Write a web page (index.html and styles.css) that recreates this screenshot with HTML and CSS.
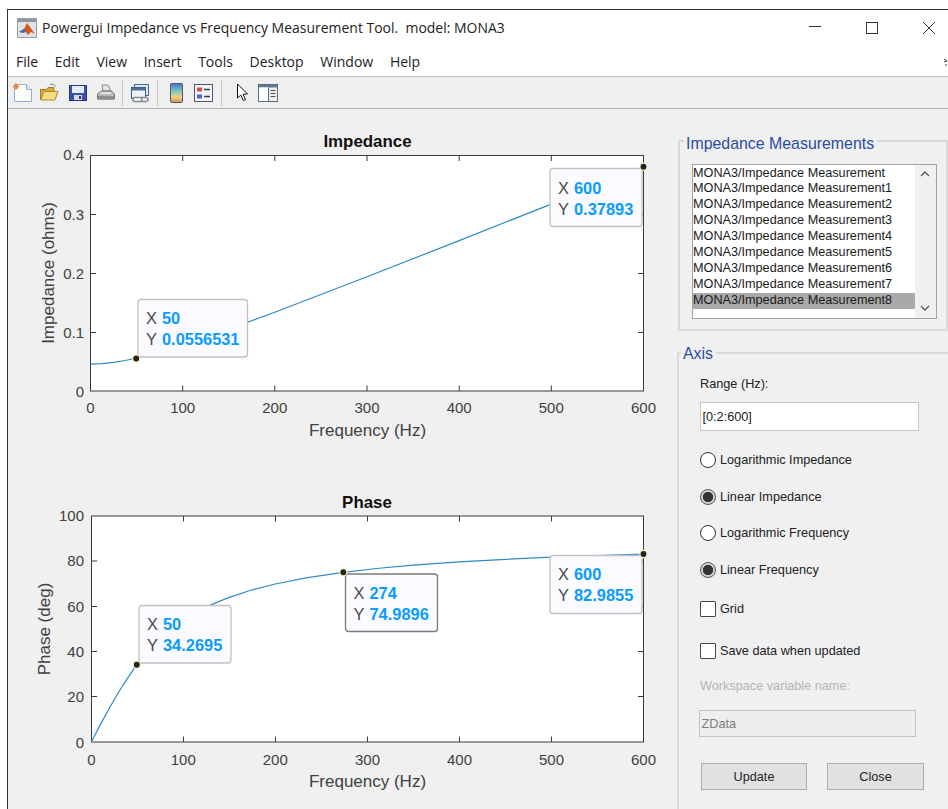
FILE: index.html
```html
<!DOCTYPE html>
<html lang="en">
<head>
<meta charset="utf-8">
<title>Powergui Impedance vs Frequency Measurement Tool</title>
<link rel="stylesheet" href="styles.css">
</head>
<body>
<div class="window">
  <header class="titlebar">
    <svg class="app-icon" width="20" height="20" viewBox="0 0 20 20">
      <rect x="0.5" y="0.5" width="19" height="19" fill="#dfe3ea" stroke="#9aa0a8"/>
      <rect x="1" y="1" width="18" height="3" fill="#8f959d"/>
      <path d="M2 14l5-3 3-6 3 4 5 7-4-2-3 3-3-4z" fill="#d9581c"/>
      <path d="M2 14l5-3 2 3-3 1z" fill="#3d6fb0"/>
    </svg>
    <span class="title-text">Powergui Impedance vs Frequency Measurement Tool.&nbsp; model: MONA3</span>
    <div class="window-controls">
      <svg width="14" height="14" viewBox="0 0 14 14"><path d="M1 5.5h12" stroke="#333" fill="none"/></svg>
      <svg width="14" height="14" viewBox="0 0 14 14"><rect x="1.5" y="1.5" width="11" height="11" stroke="#333" fill="none"/></svg>
      <svg width="14" height="14" viewBox="0 0 14 14"><path d="M1 1l12 12M13 1L1 13" stroke="#333" fill="none"/></svg>
    </div>
  </header>

  <nav class="menubar">
    <span>File</span><span>Edit</span><span>View</span><span>Insert</span><span>Tools</span><span>Desktop</span><span>Window</span><span>Help</span>
    <svg class="dock-arrow" width="4" height="8" viewBox="0 0 4 8"><path d="M0 1l3 2-3 1M1 7h2" stroke="#444" fill="none"/></svg>
  </nav>

  <div class="toolbar">
    <!-- new figure -->
    <svg class="tool" width="20" height="20" viewBox="0 0 20 20">
      <path d="M1.500 1.500h12l5 5v12h-17z" fill="#fdfdfa" stroke="#8fb0d0"/>
      <path d="M13.500 1.500v5h5" fill="#dfe9f3" stroke="#8fb0d0"/>
      <circle cx="3" cy="3.500" r="2.600" fill="#f0a050"/>
      <path d="M3 0v7M0 3.500h6" stroke="#e87040"/>
    </svg>
    <!-- open -->
    <svg class="tool g6" width="20" height="20" viewBox="0 0 20 20">
      <path d="M1.500 6.500h6l1.500-2h6v12h-13.500z" fill="#d9a93a" stroke="#a67f25"/>
      <path d="M11 1.500c2.500-.8 4.500 0 5.500 2" stroke="#5c86b0" fill="none"/>
      <path d="M2 17l2.500-8.500h14.500l-3 8.500z" fill="#f6dc80" stroke="#b08a30"/>
    </svg>
    <!-- save -->
    <svg class="tool g9" width="20" height="20" viewBox="0 0 20 20">
      <rect x="1.500" y="2.500" width="17" height="15" fill="#3b4fb0" stroke="#2a387f"/>
      <rect x="4" y="3" width="12" height="7" fill="#e8ecf8"/>
      <rect x="6" y="12" width="8" height="5" fill="#d9dce6"/>
      <rect x="11" y="13" width="2" height="3" fill="#333a60"/>
    </svg>
    <!-- print -->
    <svg class="tool g8" width="20" height="20" viewBox="0 0 20 20">
      <path d="M6 2h6l3 6H7z" fill="#e6e6e6" stroke="#8a8a8a"/>
      <path d="M1.500 11l4-3h10l3 3v5h-17z" fill="#b8b8b8" stroke="#777"/>
      <path d="M2 13h16v3.500H2z" fill="#8d8d8d"/>
      <rect x="4" y="9.500" width="11" height="1.500" fill="#ececec"/>
    </svg>
    <span class="sep g6"></span>
    <!-- link plot -->
    <svg class="tool g7" width="20" height="20" viewBox="0 0 20 20">
      <rect x="4.500" y="1.500" width="14" height="11" fill="#dfe8f1" stroke="#4a6a8c"/>
      <rect x="1.500" y="4.500" width="14" height="11" fill="#eef2f6" stroke="#3f5f82"/>
      <rect x="2" y="5" width="13" height="2.500" fill="#4a6f98"/>
      <path d="M5 14.500h5a2 2 0 0 1 0 4H5a2 2 0 0 1 0-4zM11 14.500h5a2 2 0 0 1 0 4h-5" stroke="#7d8a96" stroke-width="1.500" fill="#fff"/>
    </svg>
    <span class="sep g7"></span>
    <!-- colorbar -->
    <svg class="tool g12" width="13" height="20" viewBox="0 0 13 20">
      <defs>
        <linearGradient id="cbar" x1="0" y1="0" x2="0" y2="1">
          <stop offset="0" stop-color="#3f74c4"/>
          <stop offset="0.45" stop-color="#8ccbbc"/>
          <stop offset="0.7" stop-color="#ead57c"/>
          <stop offset="1" stop-color="#e08c50"/>
        </linearGradient>
      </defs>
      <rect x="0.500" y="0.500" width="12" height="19" rx="1" fill="url(#cbar)" stroke="#4a5a72"/>
    </svg>
    <!-- legend -->
    <svg class="tool g11" width="20" height="20" viewBox="0 0 20 20">
      <rect x="0.500" y="1.500" width="18" height="17" fill="#f4f5f8" stroke="#4a5a72"/>
      <rect x="3" y="4.500" width="5" height="4" fill="#e04848"/>
      <rect x="3" y="11.500" width="5" height="4" fill="#5060e0"/>
      <path d="M10 6.500h6M10 13.500h6" stroke="#333a55" stroke-width="1.500"/>
    </svg>
    <span class="sep g7"></span>
    <!-- pointer -->
    <svg class="tool g14" width="13" height="20" viewBox="0 0 13 20">
      <path d="M1.500 1v14l3.300-2.900 2.500 5.400 2.200-1-2.500-5.200 4.500-.3z" fill="#fff" stroke="#111"/>
    </svg>
    <!-- property panel -->
    <svg class="tool g9" width="20" height="20" viewBox="0 0 20 20">
      <rect x="0.500" y="1.500" width="19" height="17" fill="#eceef0" stroke="#5d6a78"/>
      <rect x="1" y="2" width="18" height="2.500" fill="#5f7a96"/>
      <rect x="1" y="4.500" width="9" height="13.500" fill="#fff"/>
      <path d="M10.500 4.500v13.500" stroke="#5d6a78"/>
      <path d="M12.500 7.500h5M12.500 10.500h5M12.500 13.500h5" stroke="#47525e"/>
    </svg>
  </div>

  <main class="content">
    <!-- Both axes share one drawing; the view box uses the window's own coordinates. -->
    <svg class="plots" width="669" height="700" viewBox="8 109 669 700">
      <g class="axes">
        <rect x="90.500" y="155.500" width="553" height="235.500" class="plot-area"/>
        <path class="ticks" d="M182.700 391v-5.500M274.800 391v-5.500M367 391v-5.500M459.200 391v-5.500M551.300 391v-5.500M182.700 155.500v5.500M274.800 155.500v5.500M367 155.500v5.500M459.200 155.500v5.500M551.300 155.500v5.500M90.500 332.500h5.500M90.500 273.500h5.500M90.500 214.500h5.500M643.500 332.500h-5.500M643.500 273.500h-5.500M643.500 214.500h-5.500"/>
        <polyline class="curve" points="90.500,364.200 102,363.600 113.500,362.300 125.100,360.500 136.600,358.200 159.600,352.200 182.700,345.100 205.700,337.400 228.800,329.200 274.800,312.200 367,276.800 459.200,240.600 551.300,204.100 643.500,167.400"/>
        <text class="plot-title" x="367.500" y="147">Impedance</text>
        <g class="tick-y">
          <text x="84" y="160">0.4</text><text x="84" y="219.500">0.3</text><text x="84" y="278.500">0.2</text><text x="84" y="338">0.1</text><text x="84" y="397">0</text>
        </g>
        <g class="tick-x">
          <text x="90.500" y="413">0</text><text x="182.700" y="413">100</text><text x="274.800" y="413">200</text><text x="367" y="413">300</text><text x="459.200" y="413">400</text><text x="551.300" y="413">500</text><text x="643.500" y="413">600</text>
        </g>
        <text class="axis-label" x="367.500" y="436">Frequency (Hz)</text>
        <text class="axis-label" transform="translate(54 273) rotate(-90)">Impedance (ohms)</text>

        <g class="tip">
          <rect x="138" y="299.500" width="109.500" height="57.500" rx="3"/>
          <text x="146" y="324">X <tspan class="val" x="162">50</tspan></text>
          <text x="146" y="345">Y <tspan class="val" x="162">0.0556531</tspan></text>
        </g>
        <circle class="marker" cx="136.200" cy="358.500" r="3.600"/>
        <g class="tip">
          <rect x="550" y="168.500" width="92" height="58" rx="3"/>
          <text x="558" y="194">X <tspan class="val" x="574">600</tspan></text>
          <text x="558" y="215">Y <tspan class="val" x="574">0.37893</tspan></text>
        </g>
        <circle class="marker" cx="643.500" cy="166.800" r="3.600"/>
      </g>

      <g class="axes">
        <rect x="91.500" y="516" width="552" height="226" class="plot-area"/>
        <path class="ticks" d="M183.500 742v-5.500M275.500 742v-5.500M367.500 742v-5.500M459.500 742v-5.500M551.500 742v-5.500M183.500 516v5.500M275.500 516v5.500M367.500 516v5.500M459.500 516v5.500M551.500 516v5.500M91.500 696.500h5.500M91.500 651.500h5.500M91.500 606.500h5.500M91.500 561h5.500M643.500 696.500h-5.500M643.500 651.500h-5.500M643.500 606.500h-5.500M643.500 561h-5.500"/>
        <polyline class="curve" points="91.300,742 95.900,733.200 100.500,724.400 105.100,715.900 109.700,707.500 114.300,699.500 118.900,691.700 123.500,684.300 128.100,677.300 132.700,670.700 137.300,664.400 146.500,653.200 160.300,638.800 171.800,628.900 183.300,620.500 194.800,613.200 206.300,607.100 217.800,601.900 229.300,597.400 252.300,589.800 275.300,584 307.500,577.600 343.400,572.300 376.500,568.500 413.300,565.100 459.300,561.900 505.300,559.300 551.300,557.200 643.300,554.200"/>
        <text class="plot-title" x="367" y="508">Phase</text>
        <g class="tick-y">
          <text x="84" y="521">100</text><text x="84" y="566">80</text><text x="84" y="611.500">60</text><text x="84" y="657">40</text><text x="84" y="702">20</text><text x="84" y="748">0</text>
        </g>
        <g class="tick-x">
          <text x="91.300" y="765">0</text><text x="183.300" y="765">100</text><text x="275.300" y="765">200</text><text x="367.500" y="765">300</text><text x="459.500" y="765">400</text><text x="551.500" y="765">500</text><text x="643.500" y="765">600</text>
        </g>
        <text class="axis-label" x="367.500" y="787">Frequency (Hz)</text>
        <text class="axis-label" transform="translate(50 629) rotate(-90)">Phase (deg)</text>

        <g class="tip">
          <rect x="139" y="605.500" width="92" height="57.500" rx="3"/>
          <text x="147" y="630">X <tspan class="val" x="163">50</tspan></text>
          <text x="147" y="651">Y <tspan class="val" x="163">34.2695</tspan></text>
        </g>
        <circle class="marker" cx="136.800" cy="664.700" r="3.600"/>
        <g class="tip tip-active">
          <rect x="345.500" y="574" width="92" height="57.500" rx="3"/>
          <text x="353.500" y="599">X <tspan class="val" x="369.500">274</tspan></text>
          <text x="353.500" y="620">Y <tspan class="val" x="369.500">74.9896</tspan></text>
        </g>
        <circle class="marker" cx="343.300" cy="572.300" r="3.600"/>
        <g class="tip">
          <rect x="550" y="555.500" width="92" height="58" rx="3"/>
          <text x="558" y="580">X <tspan class="val" x="574">600</tspan></text>
          <text x="558" y="601">Y <tspan class="val" x="574">82.9855</tspan></text>
        </g>
        <circle class="marker" cx="643.500" cy="554" r="3.600"/>
      </g>
    </svg>

    <aside class="side">
      <section class="group group-list">
        <h2 class="group-title">Impedance Measurements</h2>
        <div class="listbox">
          <ul class="list-items">
            <li>MONA3/Impedance Measurement</li>
            <li>MONA3/Impedance Measurement1</li>
            <li>MONA3/Impedance Measurement2</li>
            <li>MONA3/Impedance Measurement3</li>
            <li>MONA3/Impedance Measurement4</li>
            <li>MONA3/Impedance Measurement5</li>
            <li>MONA3/Impedance Measurement6</li>
            <li>MONA3/Impedance Measurement7</li>
            <li class="selected">MONA3/Impedance Measurement8</li>
          </ul>
          <div class="scrollbar">
            <svg width="10" height="6" viewBox="0 0 10 6"><path d="M1 5l4-4 4 4" stroke="#555" stroke-width="1.300" fill="none"/></svg>
            <svg width="10" height="6" viewBox="0 0 10 6"><path d="M1 1l4 4 4-4" stroke="#555" stroke-width="1.300" fill="none"/></svg>
          </div>
        </div>
      </section>

      <section class="group group-axis">
        <h2 class="group-title">Axis</h2>
        <div class="field-label">Range (Hz):</div>
        <div class="textbox">[0:2:600]</div>
        <label class="option opt-first"><span class="radio"></span>Logarithmic Impedance</label>
        <label class="option opt-a"><span class="radio on"></span>Linear Impedance</label>
        <label class="option opt-b"><span class="radio"></span>Logarithmic Frequency</label>
        <label class="option opt-a"><span class="radio on"></span>Linear Frequency</label>
        <label class="option opt-grid"><span class="check"></span>Grid</label>
        <label class="option opt-save"><span class="check"></span>Save data when updated</label>
        <div class="field-label muted">Workspace variable name:</div>
        <div class="textbox disabled">ZData</div>
        <div class="actions">
          <button class="btn btn-update">Update</button>
          <button class="btn btn-close">Close</button>
        </div>
      </section>
    </aside>
  </main>
</div>
</body>
</html>
```
FILE: styles.css
```css
* { box-sizing: border-box; }

html, body {
  margin: 0;
  height: 100%;
  background: #fff;
  overflow: hidden;
}

body {
  padding: 9px 0 0 7px;
  font-family: "Liberation Sans", Arial, sans-serif;
  color: #222;
}

.window {
  height: 800px;
  border-top: 1px solid #26343a;
  border-left: 1px solid #26343a;
  background: #f0f0f0;
  display: flex;
  flex-direction: column;
  overflow: hidden;
}

/* Title bar */
.titlebar {
  height: 34px;
  flex: none;
  background: #fff;
  display: flex;
  align-items: center;
  padding-left: 9px;
}

.app-icon { flex: none; margin-top: 2px; }

.title-text {
  margin: 2px 0 0 5px;
  font: 13.980px/20px "Open Sans", sans-serif;
  color: #222;
  white-space: nowrap;
}

.window-controls {
  margin-left: auto;
  padding-right: 12px;
  display: flex;
  gap: 43px;
  margin-top: 2px;
}

/* Menu bar */
.menubar {
  height: 33px;
  flex: none;
  background: #fff;
  border-bottom: 1px solid #bdbdbd;
  display: flex;
  align-items: center;
  gap: 16.700px;
  padding: 3px 0 0 8px;
  font: 14px/20px "Open Sans", sans-serif;
  color: #222;
}

.dock-arrow { margin-left: auto; }

/* Toolbar */
.toolbar {
  height: 32px;
  flex: none;
  background: #efefef;
  border-bottom: 1px solid #b4b4b4;
  display: flex;
  align-items: center;
  padding-left: 5px;
}

.tool { flex: none; }
.g6 { margin-left: 6px; }
.g7 { margin-left: 7px; }
.g8 { margin-left: 8px; }
.g9 { margin-left: 9px; }
.g11 { margin-left: 11px; }
.g12 { margin-left: 12px; }
.g14 { margin-left: 14px; }

.sep {
  width: 1px;
  height: 26px;
  flex: none;
  background: #c4c4c4;
}

/* Main area */
.content {
  flex: 1;
  min-height: 0;
  display: flex;
}

.plots { flex: none; display: block; }

.plot-area { fill: #fff; stroke: #3a3a3a; stroke-width: 1; }
.ticks { stroke: #3a3a3a; stroke-width: 1; fill: none; }
.curve { fill: none; stroke: #2f8ac6; stroke-width: 1.200; }

.axes text { font-family: "Liberation Sans", Arial, sans-serif; fill: #404040; }
.tick-y text { font-size: 15px; text-anchor: end; }
.tick-x text { font-size: 15px; text-anchor: middle; }
.axes .axis-label { font-size: 17px; text-anchor: middle; }
.axes .plot-title { font-size: 16.900px; font-weight: 700; fill: #111; text-anchor: middle; }

.tip rect { fill: #fbfbff; stroke: #c2c2c6; stroke-width: 1.300; }
.tip-active rect { stroke: #7a7a7a; }
.axes .tip text { font-size: 16.400px; fill: #4a4a4a; }
.axes .tip .val { font-weight: 700; fill: #0a9bff; }

.marker { fill: #23231f; stroke: #f6f3c4; stroke-width: 1.300; }

/* Right column */
.side {
  flex: 1;
  min-width: 0;
  padding-top: 31px;
  overflow: hidden;
}

.group {
  position: relative;
  border: 2px solid #d9d9d9;
  margin-right: -6px;
}

.group-title {
  position: absolute;
  top: -9px;
  margin: 0;
  padding: 0 3px 0 2px;
  background: #f0f0f0;
  font-size: 15.900px;
  line-height: 18px;
  font-weight: 400;
  color: #2a4ca0;
}

.group-list {
  height: 191px;
  margin: 0 0 21px 1px;
  padding: 22px 0 0 12px;
}

.group-list .group-title { left: 4px; top: -7px; }

.listbox {
  width: 244.500px;
  height: 155px;
  border: 1px solid #a2a2a2;
  background: #fff;
  display: flex;
  font-size: 12.660px;
  line-height: 15.900px;
  color: #1a1a1a;
}

.list-items {
  list-style: none;
  margin: 0;
  padding: 0.500px 0 0;
  flex: 1;
}

.list-items li { height: 15.900px; white-space: nowrap; }
.list-items .selected { background: #a9a9a9; }

.scrollbar {
  width: 21px;
  flex: none;
  background: #f0f0f0;
  display: flex;
  flex-direction: column;
  justify-content: space-between;
  align-items: center;
  padding: 6px 0 7px;
}

.group-axis {
  height: 470px;
  padding: 23px 0 0 21px;
}

.group-axis .group-title { left: 2px; }

.field-label {
  font-size: 12.700px;
  line-height: 14px;
  color: #222;
}

.field-label.muted { margin-top: 20px; color: #b4b4b4; }

.textbox {
  font-size: 12.700px;
  background: #fff;
  border: 1.500px solid #c8c8c8;
  width: 219px;
  height: 29px;
  margin-top: 11px;
  padding-left: 1.500px;
  display: flex;
  align-items: center;
}

.textbox.disabled {
  margin-top: 17px;
  margin-left: -1px;
  width: 217px;
  height: 27px;
  background: #eeeeee;
  border-color: #c4c4c4;
  color: #7d7d7d;
}

.option {
  display: flex;
  align-items: center;
  gap: 4px;
  height: 16px;
  font-size: 12.700px;
  color: #222;
}

.opt-first { margin-top: 21px; }
.opt-a { margin-top: 21px; }
.opt-b { margin-top: 20px; }
.opt-grid { margin-top: 23px; }
.opt-save { margin-top: 26px; }

.radio {
  width: 16px;
  height: 16px;
  flex: none;
  border-radius: 50%;
  border: 1px solid #333;
  background: #fff;
}

.radio.on {
  border-color: #555;
  background: radial-gradient(circle, #333 0 4.800px, #d4d4d4 5.500px);
}

.check {
  width: 16px;
  height: 16px;
  flex: none;
  border: 1px solid #444;
  border-radius: 1px;
  background: #fff;
}

.actions {
  display: flex;
  gap: 20px;
  margin: 26px 0 0 1px;
}

.btn {
  height: 27px;
  padding: 0;
  font: 12.700px "Liberation Sans", Arial, sans-serif;
  color: #222;
  background: #e1e1e1;
  border: 1px solid #adadad;
}

.btn-update { width: 106px; }
.btn-close { width: 97px; }
```
